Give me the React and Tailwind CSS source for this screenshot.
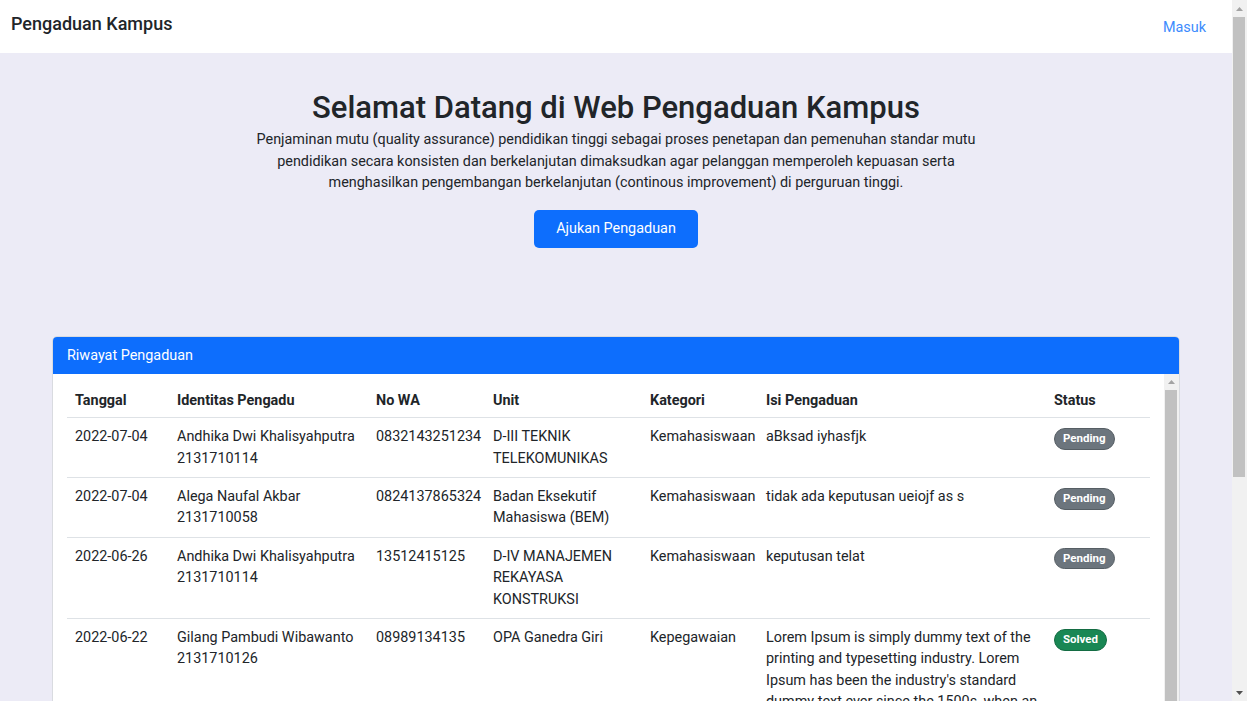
import React from 'react';

const rows = [
  { tgl: '2022-07-04', nama: 'Andhika Dwi Khalisyahputra', nim: '2131710114', wa: '0832143251234', unit: 'D-III TEKNIK TELEKOMUNIKAS', kat: 'Kemahasiswaan', isi: 'aBksad iyhasfjk', status: 'Pending' },
  { tgl: '2022-07-04', nama: 'Alega Naufal Akbar', nim: '2131710058', wa: '0824137865324', unit: 'Badan Eksekutif Mahasiswa (BEM)', kat: 'Kemahasiswaan', isi: 'tidak ada keputusan ueiojf as s', status: 'Pending' },
  { tgl: '2022-06-26', nama: 'Andhika Dwi Khalisyahputra', nim: '2131710114', wa: '13512415125', unit: 'D-IV MANAJEMEN REKAYASA KONSTRUKSI', kat: 'Kemahasiswaan', isi: 'keputusan telat', status: 'Pending' },
  { tgl: '2022-06-22', nama: 'Gilang Pambudi Wibawanto', nim: '2131710126', wa: '08989134135', unit: 'OPA Ganedra Giri', kat: 'Kepegawaian', isi: "Lorem Ipsum is simply dummy text of the printing and typesetting industry. Lorem Ipsum has been the industry's standard dummy text ever since the 1500s, when an unknown printer took a galley of type and scrambled it to make a type specimen book.", status: 'Solved' },
  { tgl: '2022-06-20', nama: 'Alega Naufal Akbar', nim: '2131710058', wa: '0824137865324', unit: 'Perpustakaan', kat: 'Fasilitas', isi: 'buku kurang lengkap', status: 'Pending' },
];

const font = { fontFamily: '"Segoe UI", Roboto, sans-serif' };

const Badge = ({ status }) => (
  <span
    className={`inline-block rounded-full border px-[8px] py-[4px] text-[11.5px] font-bold leading-[11.5px] text-white ${
      status === 'Solved' ? 'border-[#146c43] bg-[#198754]' : 'border-[#565e64] bg-[#6c757d]'
    }`}
  >
    {status}
  </span>
);

const Arrow = ({ up, color }) => (
  <svg width="7" height="4" viewBox="0 0 7 4">
    <path d={up ? 'M0 4 L3.5 0 L7 4 Z' : 'M0 0 L3.5 4 L7 0 Z'} fill={color} />
  </svg>
);

const App = () => {
  return (
    <div className="flex h-[701px] overflow-hidden bg-[#ecebf6] text-[14.4px] leading-[21.4px] text-[#212529]" style={font}>
      <div className="w-[1232px] shrink-0 overflow-hidden">
        {/* Navbar */}
        <nav className="flex h-[53px] items-center justify-between bg-white pl-[11px] pr-[26px]">
          <span className="mb-[5px] text-[18px] font-medium text-[#212529]">Pengaduan Kampus</span>
          <a className="mt-[3px] text-[14.4px] text-[#3d8bfd]">Masuk</a>
        </nav>

        {/* Hero */}
        <div className="flex flex-col items-center pt-[33px] text-center leading-[21.6px]">
          <h1 className="text-[31px] font-medium leading-[43px]">Selamat Datang di Web Pengaduan Kampus</h1>
          <p className="mt-0 max-w-[760px]">
            Penjaminan mutu (quality assurance) pendidikan tinggi sebagai proses penetapan dan pemenuhan standar mutu
            pendidikan secara konsisten dan berkelanjutan dimaksudkan agar pelanggan memperoleh kepuasan serta
            menghasilkan pengembangan berkelanjutan (continous improvement) di perguruan tinggi.
          </p>
          <button className="mt-[16px] h-[38px] rounded-[5px] bg-[#0d6efd] px-[22px] text-white">Ajukan Pengaduan</button>
        </div>

        {/* Card */}
        <div className="mx-[52px] mt-[88px] overflow-hidden rounded-[5px] border border-[#d9dbe0] bg-white">
          <div className="flex h-[37px] items-center bg-[#0d6efd] px-[14px] text-white">Riwayat Pengaduan</div>
          <div className="flex h-[420px]">
            <div className="flex-1 overflow-hidden px-[14px] pt-[8px]">
              <table className="w-full table-fixed border-collapse text-left">
                <thead>
                  <tr className="border-b border-[#dee2e6]">
                    <th className="w-[102px] px-2 pt-2 pb-[6px] font-bold">Tanggal</th>
                    <th className="w-[199px] px-2 pt-2 pb-[6px] font-bold">Identitas Pengadu</th>
                    <th className="w-[117px] px-2 pt-2 pb-[6px] font-bold">No WA</th>
                    <th className="w-[157px] px-2 pt-2 pb-[6px] font-bold">Unit</th>
                    <th className="w-[116px] px-2 pt-2 pb-[6px] font-bold">Kategori</th>
                    <th className="w-[288px] px-2 pt-2 pb-[6px] font-bold">Isi Pengaduan</th>
                    <th className="px-2 pt-2 pb-[6px] font-bold">Status</th>
                  </tr>
                </thead>
                <tbody>
                  {rows.map((r, i) => (
                    <tr key={i} className="border-b border-[#dee2e6] align-top">
                      <td className="p-2">{r.tgl}</td>
                      <td className="p-2">
                        {r.nama}
                        <br />
                        {r.nim}
                      </td>
                      <td className="p-2">{r.wa}</td>
                      <td className="p-2">{r.unit}</td>
                      <td className="p-2">{r.kat}</td>
                      <td className="p-2">{r.isi}</td>
                      <td className="p-2 pt-[9px]">
                        <Badge status={r.status} />
                      </td>
                    </tr>
                  ))}
                </tbody>
              </table>
            </div>
            {/* table scrollbar */}
            <div className="flex w-[15px] shrink-0 flex-col bg-[#f1f1f1]">
              <div className="flex h-[16px] items-center justify-center">
                <Arrow up color="#a3a3a3" />
              </div>
              <div className="ml-[1px] mr-[2px] flex-1 bg-[#c1c1c1]" />
            </div>
          </div>
        </div>
      </div>

      {/* page scrollbar */}
      <div className="flex w-[15px] shrink-0 flex-col bg-[#f1f1f1]">
        <div className="flex h-[17px] items-center justify-center">
          <Arrow up color="#a3a3a3" />
        </div>
        <div className="ml-[1px] mr-[2px] h-[460px] bg-[#c1c1c1]" />
        <div className="flex-1" />
        <div className="flex h-[17px] items-center justify-center">
          <Arrow color="#505050" />
        </div>
      </div>
    </div>
  );
};

export default App;
